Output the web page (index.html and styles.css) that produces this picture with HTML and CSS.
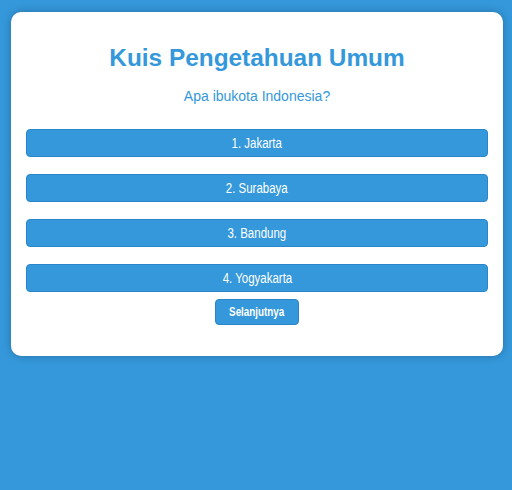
FILE: index.html
```html
<!DOCTYPE html>
<html lang="id">
<head>
<meta charset="utf-8">
<title>Kuis Pengetahuan Umum</title>
<link rel="stylesheet" href="styles.css">
</head>
<body>
<div class="card">
  <h1 class="title">Kuis Pengetahuan Umum</h1>
  <p class="question">Apa ibukota Indonesia?</p>
  <div class="options">
    <button class="option"><span class="label">1. Jakarta</span></button>
    <button class="option"><span class="label">2. Surabaya</span></button>
    <button class="option"><span class="label">3. Bandung</span></button>
    <button class="option"><span class="label">4. Yogyakarta</span></button>
  </div>
  <div class="actions">
    <button class="next"><span class="label">Selanjutnya</span></button>
  </div>
</div>
</body>
</html>
```
FILE: styles.css
```css
html, body {
  margin: 0;
  padding: 0;
}
body {
  background: #3498db;
  font-family: "Liberation Sans", Arial, sans-serif;
  height: 490px;
  overflow: hidden;
}
.card {
  margin: 12px 9px 0 11px;
  background: #ffffff;
  border-radius: 10px;
  box-shadow: 0 0 8px rgba(0, 0, 0, 0.25);
  padding: 20px 15px 31px;
  text-align: center;
}
.title {
  margin: 12px 0 17px;
  font-size: 24.4px;
  font-weight: bold;
  color: #3498db;
  line-height: 27px;
}
.question {
  margin: 0 0 25px;
  font-size: 14px;
  line-height: 16px;
  color: #3498db;
}
.options {
  display: flex;
  flex-direction: column;
  gap: 17px;
}
.option {
  display: block;
  width: 100%;
  height: 28px;
  margin: 0;
  padding: 0;
  background: #3498db;
  border: 1px solid #2a86c8;
  border-radius: 4px;
  color: #ffffff;
  font-family: "Liberation Sans", Arial, sans-serif;
  font-size: 14px;
}
.label {
  display: inline-block;
  transform: scaleX(0.82);
}
.actions {
  display: flex;
  justify-content: center;
  margin-top: 7px;
}
.next {
  width: 84px;
  height: 26px;
  margin: 0;
  padding: 0;
  background: #3498db;
  border: 1px solid #2a86c8;
  border-radius: 4px;
  color: #ffffff;
  font-family: "Liberation Sans", Arial, sans-serif;
  font-weight: bold;
  font-size: 12px;
}
```
